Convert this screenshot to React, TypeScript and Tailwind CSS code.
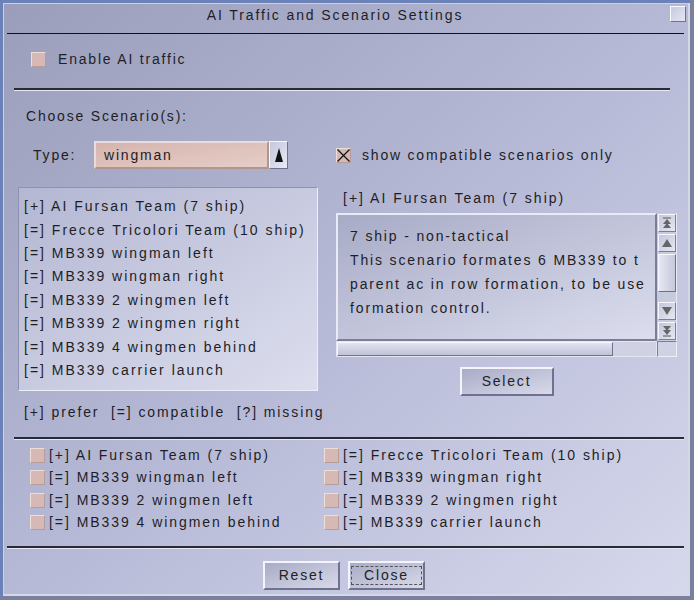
import React from "react"

// ---------- Data ----------

const LIST = [
  "[+] AI Fursan Team (7 ship)",
  "[=] Frecce Tricolori Team (10 ship)",
  "[=] MB339 wingman left",
  "[=] MB339 wingman right",
  "[=] MB339 2 wingmen left",
  "[=] MB339 2 wingmen right",
  "[=] MB339 4 wingmen behind",
  "[=] MB339 carrier launch",
]

const DESC = [
  "7 ship - non-tactical",
  "This scenario formates 6 MB339 to t",
  "parent ac in row formation, to be use",
  "formation control.",
]

const FONT = { fontFamily: '"Liberation Sans", Arial, sans-serif' }

// ---------- Bits ----------

const Box = ({ checked }: { checked?: boolean }) => (
  <span className="flex items-center justify-center w-[15px] h-[15px] bg-[#d6b8b4] border border-t-[#eededa] border-l-[#eededa] border-r-[#b89c98] border-b-[#b89c98] shrink-0">
    {checked && (
      <svg width="13" height="13" viewBox="0 0 13 13">
        <path d="M0.5 0.5L12.5 12.5M12.5 0.5L0.5 12.5" stroke="#111" strokeWidth="1.2" />
      </svg>
    )}
  </span>
)

const Separator = ({ cls }: { cls: string }) => (
  <div className={`h-[3px] border-t-2 border-t-[#2a2a34] border-b border-b-[#e4e6f4] ${cls}`} />
)

const RaisedButton = ({ label, cls, focus }: { label: string; cls: string; focus?: boolean }) => (
  <div
    className={`flex items-center justify-center h-[29px] bg-gradient-to-br from-[#a8abc6] to-[#d8daea] border-2 border-t-[#f4f4fc] border-l-[#f4f4fc] border-r-[#6e7290] border-b-[#6e7290] text-[14px] tracking-[1.8px] text-[#222] ${cls}`}
  >
    {focus ? (
      <span className="border border-dashed border-[#555] px-[4px] leading-[17px] w-[71px] text-center">{label}</span>
    ) : (
      label
    )}
  </div>
)

const ScrollBtn = ({ dbl, up }: { dbl?: boolean; up?: boolean }) => (
  <div className="w-[18px] h-[18px] flex items-center justify-center bg-gradient-to-br from-[#c4c6dc] to-[#e6e8f4] border border-t-[#f8f8fc] border-l-[#f8f8fc] border-r-[#7a7e98] border-b-[#7a7e98]">
    <svg width="12" height="12" viewBox="0 0 12 12">
      {up ? (
        dbl ? (
          <>
            <path d="M2 1H10" stroke="#555" />
            <path d="M6 2L10 7H2Z" fill="#666" />
            <path d="M6 6L10 11H2Z" fill="#666" />
          </>
        ) : (
          <path d="M6 2L11 10H1Z" fill="#666" />
        )
      ) : dbl ? (
        <>
          <path d="M6 10L10 5H2Z" fill="#666" />
          <path d="M6 6L10 1H2Z" fill="#666" />
          <path d="M2 11H10" stroke="#555" />
        </>
      ) : (
        <path d="M6 10L11 2H1Z" fill="#666" />
      )}
    </svg>
  </div>
)

// ---------- App ----------

export default function App() {
  return (
    <div
      style={FONT}
      className="w-[694px] h-[600px] overflow-hidden bg-[#7a809e] text-[#1e1e26]"
    >
      <div className="w-[690px] h-[596px] border-l-[3px] border-t-[3px] border-l-[#6a82b8] border-t-[#6a82b8]">
        <div className="w-full h-full border-l border-t border-l-[#c8d0ec] border-t-[#c8d0ec] border-r-2 border-r-[#d6d8ea] border-b-2 border-b-[#d6d8ea] bg-gradient-to-br from-[#9a9ebb] via-[#b6b9d6] to-[#d6d8ec] flex flex-col">
          {/* Title bar */}
          <div className="h-[29px] flex items-start relative">
            <div className="flex-1 text-center text-[14px] tracking-[1.9px] pr-[22px] leading-[16px] mt-[3px]">AI Traffic and Scenario Settings</div>
            <div className="absolute right-[2px] top-[2px] w-[16px] h-[16px] bg-gradient-to-br from-[#c8cade] to-[#e4e6f2] border border-t-[#fafafe] border-l-[#fafafe] border-r-[#6e7290] border-b-[#6e7290]" />
          </div>
          <div className="h-px bg-[#111] ml-[3px] mr-[4px]" />

          {/* Enable */}
          <div className="h-[50px] flex items-center">
            <span className="ml-[27px]"><Box /></span>
            <span className="ml-[12px] text-[14px] tracking-[1.8px]">Enable AI traffic</span>
          </div>
          <div className="h-[4px]" />
          <Separator cls="ml-[10px] mr-[18px]" />

          {/* Choose */}
          <div className="h-[50px] flex items-center pl-[22px] text-[14px] tracking-[1.8px]">Choose Scenario(s):</div>

          {/* Type row */}
          <div className="h-[28px] flex items-center">
            <span className="ml-[29px] w-[61px] text-[14px] tracking-[1.8px]">Type:</span>
            <div className="w-[175px] h-[28px] flex items-center pl-[8px] bg-gradient-to-br from-[#d6b4ae] to-[#e6cec8] border-2 border-t-[#ecdcd8] border-l-[#ecdcd8] border-r-[#b0968f] border-b-[#b0968f] text-[14px] tracking-[1.8px]">
              wingman
            </div>
            <div className="w-[19px] h-[28px] flex items-center justify-center bg-gradient-to-br from-[#c4c6dc] to-[#e8eaf6] border border-t-[#f8f8fc] border-l-[#f8f8fc] border-r-[#6e7290] border-b-[#6e7290]">
              <svg width="10" height="16" viewBox="0 0 10 16">
                <path d="M5 1L9 15H1Z" fill="#111" />
              </svg>
            </div>
            <span className="ml-[48px]"><Box checked /></span>
            <span className="ml-[11px] text-[14px] tracking-[1.8px]">show compatible scenarios only</span>
          </div>

          {/* Columns */}
          <div className="flex mt-[18px]">
            <div className="ml-[14px] w-[300px] h-[204px] border border-t-[#8e92ae] border-l-[#8e92ae] border-r-[#eceef8] border-b-[#eceef8] bg-gradient-to-br from-[#b4b7d2] to-[#dcdeee] pt-[7px] pl-[5px]">
              {LIST.map((t) => (
                <div key={t} className="h-[23.4px] flex items-center text-[14px] tracking-[2px] whitespace-nowrap">{t}</div>
              ))}
            </div>

            <div className="ml-[18px] w-[341px] flex flex-col">
              <div className="h-[22px] flex items-center pl-[7px] text-[14px] tracking-[2px] whitespace-nowrap">[+] AI Fursan Team (7 ship)</div>
              <div className="mt-[4px] flex">
                <div className="w-[321px] flex flex-col">
                  <div className="h-[128px] border-2 border-t-[#e8eaf6] border-l-[#e8eaf6] border-r-[#7a7e98] border-b-[#7a7e98] bg-gradient-to-br from-[#a8abc6] to-[#dcdeee] pt-[9px] pl-[12px] overflow-hidden">
                    {DESC.map((t) => (
                      <div key={t} className="h-[24px] flex items-center text-[14px] tracking-[1.85px] whitespace-nowrap">{t}</div>
                    ))}
                  </div>
                  <div className="h-[16px] flex border border-[#e4e6f2] bg-[#c8cade]">
                    <div className="w-[276px] h-full bg-gradient-to-b from-[#e2e4f0] to-[#c0c2d8] border border-t-[#f6f6fc] border-l-[#f6f6fc] border-r-[#6e7290] border-b-[#6e7290]" />
                    <div className="flex-1 bg-[#d0d2e4]" />
                  </div>
                </div>
                <div className="w-[20px] flex flex-col">
                  <div className="h-[128px] flex flex-col items-center bg-[#c8cade] border-r border-r-[#e8eaf6]">
                    <div className="mt-[1px]"><ScrollBtn dbl up /></div>
                    <div className="mt-[2px]"><ScrollBtn up /></div>
                    <div className="mt-[2px] w-[18px] h-[38px] bg-gradient-to-r from-[#e6e8f4] to-[#c6c8dc] border border-t-[#f8f8fc] border-l-[#f8f8fc] border-r-[#6e7290] border-b-[#6e7290]" />
                    <div className="flex-1" />
                    <div className="mb-[2px]"><ScrollBtn /></div>
                    <div className="mb-[1px]"><ScrollBtn dbl /></div>
                  </div>
                  <div className="h-[16px] bg-[#cfd1e4] border border-t-[#7a7e98] border-l-[#7a7e98] border-r-[#eef0f8] border-b-[#eef0f8]" />
                </div>
              </div>
              <div className="mt-[10px] flex justify-center">
                <RaisedButton label="Select" cls="w-[94px]" />
              </div>
            </div>
          </div>

          {/* Legend */}
          <div className="h-[33px] flex items-center pl-[20px] text-[14px] tracking-[1.9px] whitespace-pre">
            [+] prefer  [=] compatible  [?] missing
          </div>

          <div className="h-[8px]" />
          <Separator cls="ml-[10px] mr-[4px]" />

          {/* Selection grid */}
          <div className="pt-[4px] grid grid-cols-[294px_1fr]">
            {LIST.map((t) => (
              <div key={t} className="h-[22.5px] flex items-center">
                <span className="ml-[26px]"><Box /></span>
                <span className="ml-[4px] text-[14px] tracking-[1.95px] whitespace-nowrap">{t}</span>
              </div>
            ))}
          </div>

          <div className="h-[12px]" />
          <Separator cls="ml-[3px] mr-[4px]" />

          {/* Buttons */}
          <div className="mt-[12px] flex">
            <RaisedButton label="Reset" cls="ml-[259px] w-[77px]" />
            <RaisedButton label="Close" cls="ml-[8px] w-[77px]" focus />
          </div>
        </div>
      </div>
    </div>
  )
}
